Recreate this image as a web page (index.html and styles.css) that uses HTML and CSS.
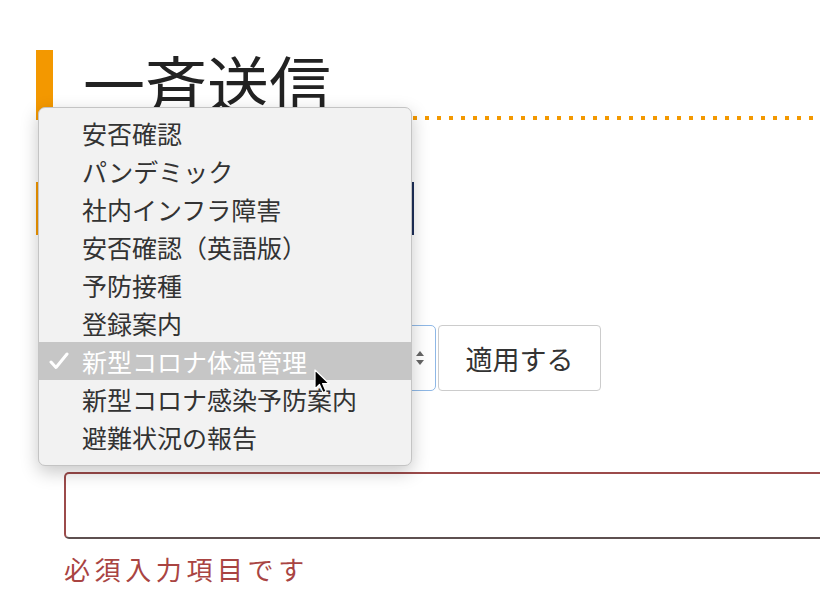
FILE: index.html
```html
<!DOCTYPE html>
<html lang="ja">
<head>
    <meta charset="UTF-8">
    <meta name="viewport" content="width=device-width, initial-scale=1.0">
    <title>一斉送信</title>
    <link rel="stylesheet" href="styles.css">
</head>
<body>
    <div class="page">
        <h1 class="title">一斉送信</h1>
        <div class="tabs"></div>

        <div class="template-row">
            <div class="select-box">
                <span class="spinner">
                    <svg width="10" height="18" viewBox="0 0 10 18"><path d="M5 2 L9 7 H1 Z" fill="#666"/><path d="M5 16 L9 11 H1 Z" fill="#666"/></svg>
                </span>
            </div>
            <button class="apply">適用する</button>
        </div>

        <div class="field">
            <input type="text" class="subject">
            <p class="error">必須入力項目です</p>
        </div>
    </div>

    <!-- open select popup -->
    <ul class="menu">
        <li>安否確認</li>
        <li>パンデミック</li>
        <li>社内インフラ障害</li>
        <li>安否確認（英語版）</li>
        <li>予防接種</li>
        <li>登録案内</li>
        <li class="selected">
            <svg class="check" width="20" height="18" viewBox="0 0 20 18"><path d="M2 10 L7 15.5 L18 2" fill="none" stroke="#fff" stroke-width="3" stroke-linecap="round" stroke-linejoin="round"/></svg>新型コロナ体温管理
        </li>
        <li>新型コロナ感染予防案内</li>
        <li>避難状況の報告</li>
    </ul>

    <svg class="cursor" width="18" height="26" viewBox="0 0 18 26">
        <path d="M1 1 L1 20 L5.5 15.5 L9 23.5 L12 22.2 L8.6 14.5 L15 14.5 Z" fill="#000" stroke="#fff" stroke-width="1.2" stroke-linejoin="round"/>
    </svg>
</body>
</html>
```

FILE: styles.css
```css
body{
    margin: 0;
    background: #fff;
    font-family: "Noto Sans CJK JP", "Noto Sans", sans-serif;
    color: #333;
    overflow: hidden;
}
.page{
    padding: 50px 0 0 36px;
    height: 600px;
    box-sizing: border-box;
    overflow: hidden;
}
.title{
    margin: 0;
    height: 70px;
    border-left: 17px solid #f39800;
    padding: 0 0 0 30px;
    font-size: 62px;
    font-weight: normal;
    line-height: 64px;
    color: #222;
    background: linear-gradient(to right, #f39800 4px, transparent 4px) repeat-x left bottom / 12px 4px;
}
.tabs{
    margin-top: 62px;
    width: 375px;
    height: 53px;
    background: #f39800;
    border-right: 3px solid #1d2f5a;
}
.template-row{
    display: flex;
    gap: 2px;
    margin: 90px 0 0 28px;
}
.select-box{
    width: 372px;
    height: 66px;
    border: 1px solid #8fb8e6;
    border-radius: 5px;
    background: #fff;
    display: flex;
    align-items: center;
    justify-content: flex-end;
    padding-right: 10px;
    box-sizing: border-box;
}
.spinner{
    display: flex;
}
.apply{
    width: 163px;
    height: 66px;
    background: #fff;
    border: 1px solid #ccc;
    border-radius: 4px;
    font-family: "Noto Sans CJK JP", sans-serif;
    font-size: 27px;
    color: #333;
}
.field{
    margin: 81px 0 0 28px;
}
.subject{
    display: block;
    width: 780px;
    height: 67px;
    box-sizing: border-box;
    border: 2px solid #9c4b4b;
    border-bottom-color: #5e5050;
    border-radius: 5px;
    margin: 0;
}
.error{
    margin: 12px 0 0 0;
    font-size: 26px;
    letter-spacing: 4.6px;
    line-height: 36px;
    color: #a94442;
}
.menu{
    position: absolute;
    left: 38px;
    top: 107px;
    width: 374px;
    height: 359px;
    margin: 0;
    padding: 6px 0 0 0;
    box-sizing: border-box;
    list-style: none;
    background: #f2f2f2;
    border: 1px solid #c4c4c4;
    border-radius: 7px;
    box-shadow: 0 6px 18px rgba(0, 0, 0, 0.22);
}
.menu li{
    position: relative;
    height: 38px;
    line-height: 38px;
    padding-left: 43px;
    font-size: 25px;
    color: #333;
}
.menu li.selected{
    background: #c6c6c6;
    color: #fff;
}
.check{
    position: absolute;
    left: 10px;
    top: 10px;
}
.cursor{
    position: absolute;
    left: 314px;
    top: 369px;
}
```
